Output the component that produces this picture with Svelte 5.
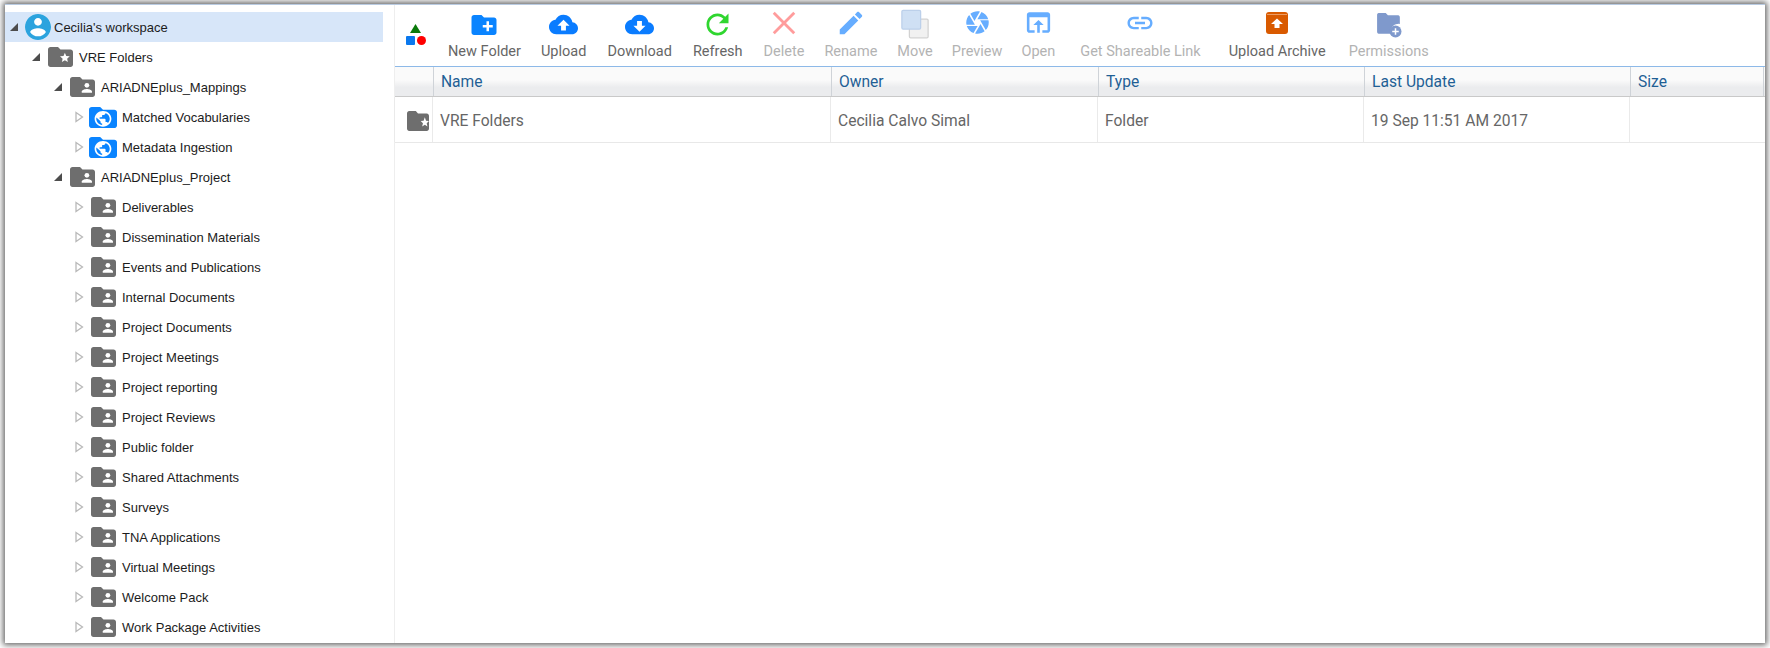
<script lang="ts">
	const folder = 'M10 4H4c-1.1 0-2 .9-2 2v12c0 1.1.9 2 2 2h16c1.1 0 2-.9 2-2V8c0-1.1-.9-2-2-2h-8l-2-2z';
	const globe =
		'M12 2C6.48 2 2 6.48 2 12s4.48 10 10 10 10-4.48 10-10S17.52 2 12 2zm-1 17.93c-3.95-.49-7-3.85-7-7.93 0-.62.08-1.21.21-1.79L9 15v1c0 1.1.9 2 2 2v1.93zm6.9-2.54c-.26-.81-1-1.39-1.9-1.39h-1v-3c0-.55-.45-1-1-1H8v-2h2c.55 0 1-.45 1-1V7h2c1.1 0 2-.9 2-2v-.41c2.93 1.19 5 4.06 5 7.41 0 2.08-.8 3.97-2.1 5.39z';

	const tree = [
		{ label: "Cecilia's workspace", level: 0, open: true, kind: 'home', selected: true },
		{ label: 'VRE Folders', level: 1, open: true, kind: 'star' },
		{ label: 'ARIADNEplus_Mappings', level: 2, open: true, kind: 'shared' },
		{ label: 'Matched Vocabularies', level: 3, kind: 'public' },
		{ label: 'Metadata Ingestion', level: 3, kind: 'public' },
		{ label: 'ARIADNEplus_Project', level: 2, open: true, kind: 'shared' },
		...[
			'Deliverables',
			'Dissemination Materials',
			'Events and Publications',
			'Internal Documents',
			'Project Documents',
			'Project Meetings',
			'Project reporting',
			'Project Reviews',
			'Public folder',
			'Shared Attachments',
			'Surveys',
			'TNA Applications',
			'Virtual Meetings',
			'Welcome Pack',
			'Work Package Activities'
		].map((label) => ({ label, level: 3, kind: 'shared' }))
	];

	const tools = [
		{ label: 'New Folder', color: '#0a84ff', size: 30, dy: 1, d: 'M20 6h-8l-2-2H4c-1.11 0-1.99.89-1.99 2L2 18c0 1.11.89 2 2 2h16c1.11 0 2-.89 2-2V8c0-1.11-.89-2-2-2zm-1 8h-3v3h-2v-3h-3v-2h3V9h2v3h3v2z', gapBefore: 1 },
		{ label: 'Upload', color: '#0a7cff', size: 29, dy: 0, d: 'M19.35 10.04C18.67 6.59 15.64 4 12 4 9.11 4 6.6 5.64 5.35 8.04 2.34 8.36 0 10.91 0 14c0 3.31 2.69 6 6 6h13c2.76 0 5-2.24 5-5 0-2.64-2.05-4.78-4.65-4.96zM14 13v4h-4v-4H7l5-5 5 5h-3z', gapBefore: 20 },
		{ label: 'Download', color: '#0a7cff', size: 29, dy: 0, d: 'M19.35 10.04C18.67 6.59 15.64 4 12 4 9.11 4 6.6 5.64 5.35 8.04 2.34 8.36 0 10.91 0 14c0 3.31 2.69 6 6 6h13c2.76 0 5-2.24 5-5 0-2.64-2.05-4.78-4.65-4.96zM17 13l-5 5-5-5h3V9h4v4h3z' },
		{ label: 'Refresh', color: '#2fd62f', size: 33, dy: 0, d: 'M17.65 6.35C16.2 4.9 14.21 4 12 4c-4.42 0-7.99 3.58-7.99 8s3.57 8 7.99 8c3.73 0 6.84-2.55 7.73-6h-2.08c-.82 2.33-3.04 4-5.65 4-3.31 0-6-2.69-6-6s2.69-6 6-6c1.66 0 3.14.69 4.22 1.78L13 11h7V4l-2.35 2.35z' },
		{ label: 'Delete', off: true, color: '#ff9c9c', size: 30, dy: -3, d: 'M21 4.6 19.4 3 12 10.4 4.6 3 3 4.6 10.4 12 3 19.4 4.6 21 12 13.6 19.4 21 21 19.4 13.6 12z' },
		{ label: 'Rename', off: true, color: '#66adff', size: 30, dy: -3, d: 'M3 17.25V21h3.75L17.81 9.94l-3.75-3.75L3 17.25zM20.71 7.04c.39-.39.39-1.02 0-1.41l-2.34-2.34c-.39-.39-1.02-.39-1.41 0l-1.83 1.83 3.75 3.75 1.83-1.83z', gapBefore: 20 },
		{ label: 'Move', off: true, kind: 'move', size: 30, dy: 0, gapBefore: 20 },
		{ label: 'Preview', off: true, color: '#66adff', size: 27, dy: -3, d: 'M9.4 10.5l4.77-8.26C13.47 2.09 12.75 2 12 2c-2.4 0-4.6.85-6.32 2.25l3.66 6.35.06-.1zM21.54 9c-.92-2.92-3.15-5.26-6-6.34L11.88 9h9.66zm.26 1h-7.49l.29.5 4.76 8.25C21 16.97 22 14.61 22 12c0-.69-.07-1.35-.2-2zM8.54 12l-3.9-6.75C3.01 7.03 2 9.39 2 12c0 .69.07 1.35.2 2h7.49l-1.15-2zm-6.08 3c.92 2.92 3.15 5.26 6 6.34L12.12 15H2.46zm11.27 0l-3.9 6.76c.7.15 1.42.24 2.17.24 2.4 0 4.6-.85 6.32-2.25l-3.66-6.35-.93 1.6z', gapBefore: 19 },
		{ label: 'Open', off: true, color: '#66adff', size: 31, dy: -3, d: 'M19 4H5c-1.11 0-2 .9-2 2v12c0 1.1.89 2 2 2h4v-2H5V8h14v10h-4v2h4c1.1 0 2-.9 2-2V6c0-1.1-.89-2-2-2zm-7 6l-4 4h3v6h2v-6h3l-4-4z', gapBefore: 19 },
		{ label: 'Get Shareable Link', off: true, color: '#66adff', size: 30, dy: -2, d: 'M3.9 12c0-1.71 1.39-3.1 3.1-3.1h4V7H7c-2.76 0-5 2.24-5 5s2.24 5 5 5h4v-1.9H7c-1.71 0-3.1-1.39-3.1-3.1zM8 13h8v-2H8v2zm9-6h-4v1.9h4c1.71 0 3.1 1.39 3.1 3.1s-1.39 3.1-3.1 3.1h-4V17h4c2.76 0 5-2.24 5-5s-2.24-5-5-5z', gapBefore: 25 },
		{ label: 'Upload Archive', kind: 'archive', size: 24, dy: -3, gapBefore: 28 },
		{ label: 'Permissions', off: true, kind: 'perm', size: 26, dy: 2, gapBefore: 23 }
	];

	const columns = ['Name', 'Owner', 'Type', 'Last Update', 'Size'];
	const cells = ['VRE Folders', 'Cecilia Calvo Simal', 'Folder', '19 Sep 11:51 AM 2017', ''];
</script>

{#snippet folderIcon(kind)}
	{#if kind === 'home'}
		<svg class="node-icon home" viewBox="2 2 20 20">
			<circle cx="12" cy="12" r="10" fill="#fff" />
			<path fill="#2ba3de" d="M12 2C6.48 2 2 6.48 2 12s4.48 10 10 10 10-4.48 10-10S17.52 2 12 2zm0 3c1.66 0 3 1.34 3 3s-1.34 3-3 3-3-1.34-3-3 1.34-3 3-3zm0 14.2c-2.5 0-4.71-1.28-6-3.22.03-1.99 4-3.08 6-3.08 1.99 0 5.97 1.09 6 3.08-1.29 1.94-3.5 3.22-6 3.22z" />
		</svg>
	{:else if kind === 'public'}
		<svg class="node-icon public" viewBox="2 4 20 16" preserveAspectRatio="none">
			<path fill="#0a84ff" d={folder} />
			<g transform="translate(4.8 5.8) scale(0.6)">
				<path fill="#fff" d={globe} />
			</g>
		</svg>
	{:else}
		<svg class="node-icon" viewBox="2 4 20 16">
			<path fill="#6e6e6e" d={folder} />
			{#if kind === 'star'}
				<path fill="#fff" d="M15.5 8.6l1.1 2.6 2.8.2-2.1 1.9.6 2.7-2.4-1.4-2.4 1.4.6-2.7-2.1-1.9 2.8-.2z" />
			{:else}
				<circle cx="15.5" cy="10.6" r="1.9" fill="#fff" />
				<path fill="#fff" d="M11.4 16.6v-1c0-1.3 2.7-2 4.1-2s4.1.7 4.1 2v1z" />
			{/if}
		</svg>
	{/if}
{/snippet}

{#snippet toolIcon(tool)}
	<svg class="tool-icon" style="width:{tool.size}px;height:{tool.size}px;margin-top:{tool.dy}px" viewBox="0 0 24 24">
		{#if tool.kind === 'move'}
			<rect x="7.5" y="8" width="15" height="15" rx="1" fill="#f1f1f1" stroke="#d2d2d2" />
			<rect x="1.5" y="1" width="15" height="15" rx="1" fill="#cfe0f4" stroke="#bcd0ea" />
		{:else if tool.kind === 'archive'}
			<rect x="1" y="1" width="22" height="22" rx="3" fill="#d95a00" />
			<rect x="2" y="3" width="20" height="1" fill="#ec9c63" />
			<path fill="#fff" d="M12 7.5l6 5.5h-3.5v4h-5v-4H6z" />
		{:else if tool.kind === 'perm'}
			<path fill="#7f99cc" d="M9 1H2.5C1.4 1 1 1.9 1 3v15c0 1.1.4 2 1.500 2H13a8 8 0 0 1 9-9V5c0-1.100-.5-2-1.500-2H11z" />
			<circle cx="18" cy="18" r="5.500" fill="#7f99cc" />
			<path fill="#fff" d="M17.300 15h1.400v2.300H21v1.400h-2.300V21h-1.400v-2.300H15v-1.400h2.300z" />
		{:else}
			<path fill={tool.color} d={tool.d} />
		{/if}
	</svg>
{/snippet}

<div class="page">
	<div class="window">
		<aside class="tree">
			{#each tree as node}
				<div class="node" class:selected={node.selected} style="padding-left:{[4, 26, 48, 69][node.level]}px">
					<svg class="arrow" viewBox="0 0 10 12">
						{#if node.open}
							<path d="M9 2v8H1z" fill="#4d4d4d" />
						{:else}
							<path d="M2 1.500 8.500 6 2 10.500z" fill="#fff" stroke="#b9b9b9" stroke-width="1.300" />
						{/if}
					</svg>
					{@render folderIcon(node.kind)}
					<span>{node.label}</span>
				</div>
			{/each}
		</aside>

		<main class="content">
			<div class="toolbar">
				<svg class="logo" viewBox="0 0 20 21">
					<path fill="#0b7a0b" d="M9.500 0l5.500 9H4z" />
					<rect x="0" y="12" width="9" height="9" rx="1" fill="#0a78ee" />
					<circle cx="15.500" cy="16.500" r="4.500" fill="#f00" />
				</svg>
				{#each tools as tool}
					<div class="tool" class:off={tool.off} style="margin-left:{tool.gapBefore ?? 21}px">
						<div class="tool-slot">{@render toolIcon(tool)}</div>
						<span>{tool.label}</span>
					</div>
				{/each}
			</div>

			<div class="grid head">
				<div class="cell"></div>
				{#each columns as col}
					<div class="cell">{col}</div>
				{/each}
			</div>
			<div class="grid row">
				<div class="cell type-cell">
					<svg viewBox="2 4 20 16" preserveAspectRatio="none">
						<path fill="#6e6e6e" d={folder} />
						<path fill="#fff" d="M18.200 9l1.100 2.700 2.700.2-2.100 1.800.7 2.700-2.400-1.400-2.400 1.400.7-2.700-2.100-1.800 2.700-.2z" />
					</svg>
				</div>
				{#each cells as value}
					<div class="cell">{value}</div>
				{/each}
			</div>
		</main>
	</div>
</div>

<style>
	:global(body) {
		margin: 0;
		background: #fff;
	}

	.page {
		box-sizing: border-box;
		height: 648px;
		padding: 4px 5px 5px;
		overflow: hidden;
	}

	.window {
		box-sizing: border-box;
		display: flex;
		height: 639px;
		overflow: hidden;
		background: #fff;
		border-top: 1px solid #b9cbe2;
		box-shadow: 0 0 6px 2px #666;
	}

	.tree {
		box-sizing: border-box;
		flex: none;
		width: 390px;
		padding-top: 7px;
		padding-right: 11px;
		border-right: 1px solid #eee;
		font: 13px "Liberation Sans", Arial, sans-serif;
		color: #1c1c1c;
	}

	.node {
		display: flex;
		align-items: center;
		height: 30px;
		white-space: nowrap;
	}

	.selected {
		background: #d7e6f9;
	}

	.arrow {
		flex: none;
		width: 10px;
		height: 12px;
		margin-right: 6px;
	}

	.node-icon {
		flex: none;
		width: 25px;
		height: 20px;
		margin: 0 6px 0 1px;
	}

	.node-icon.home {
		width: 26px;
		height: 26px;
		margin: 0 3px 0 0;
	}

	.node-icon.public {
		width: 28px;
		height: 21px;
		margin: 0 5px 0 -1px;
	}

	.content {
		flex: 1;
		min-width: 0;
		font-family: Roboto, sans-serif;
	}

	.toolbar {
		box-sizing: border-box;
		display: flex;
		height: 62px;
		padding-left: 11px;
		border-bottom: 1px solid #8db9e8;
	}

	.logo {
		flex: none;
		width: 20px;
		height: 21px;
		margin: 19px 21px 0 0;
	}

	.tool {
		display: flex;
		flex-direction: column;
		align-items: center;
		font-size: 14.5px;
		color: #666;
		white-space: nowrap;
	}

	.tool.off {
		color: #b3b3b3;
	}

	.tool-slot {
		display: flex;
		align-items: center;
		justify-content: center;
		height: 38px;
	}

	.tool-icon {
		flex: none;
	}

	.grid {
		display: grid;
		grid-template-columns: 39px 398px 267px 266px 266px 133px;
		color: #666;
		font-size: 15.6px;
	}

	.head {
		box-sizing: border-box;
		height: 30px;
		background: linear-gradient(#fafafa 0 45%, #ebecee 70%, #ebecee);
		border-bottom: 1px solid #c9c9c9;
		color: #1f5f95;
	}

	.head .cell {
		display: flex;
		align-items: center;
		padding-left: 7px;
		border-right: 1px solid #cfd3d8;
	}

	.row {
		box-sizing: border-box;
		height: 46px;
		border-bottom: 1px solid #e8e8e8;
	}

	.row .cell {
		display: flex;
		align-items: center;
		padding: 2px 0 0 7px;
		border-right: 1px solid #eaeaea;
		transform: translateX(-1px);
	}

	.row .cell:last-child {
		border-right: none;
	}

	.type-cell {
		border-left: 1px solid #eaeaea;
	}

	.type-cell svg {
		flex: none;
		width: 22px;
		height: 20px;
		margin-left: 5px;
	}
</style>
